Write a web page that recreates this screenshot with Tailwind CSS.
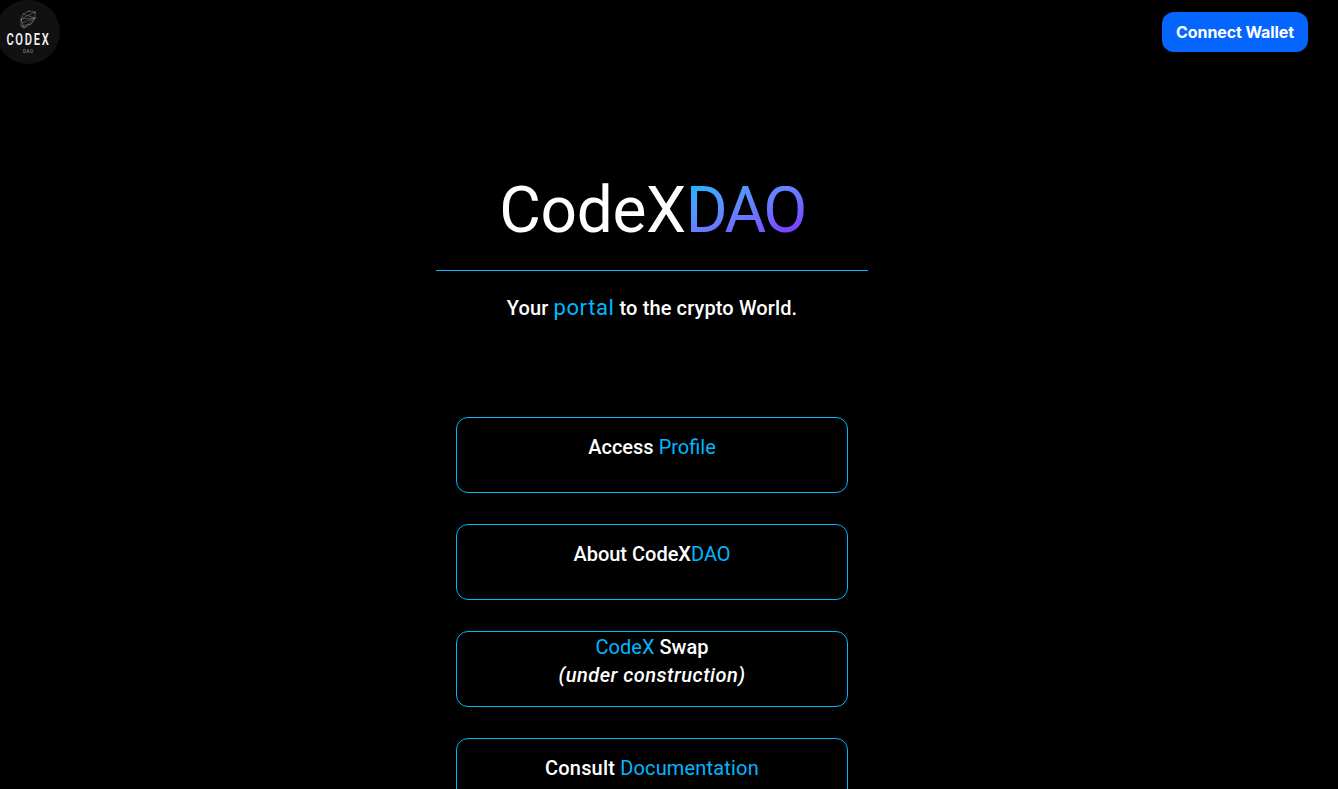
<!DOCTYPE html>
<html lang="en">
<head>
<meta charset="utf-8">
<title>CodeXDAO</title>
<script src="https://cdn.jsdelivr.net/npm/@tailwindcss/browser@4"></script>
</head>
<body class="h-screen overflow-hidden bg-black font-['Roboto',sans-serif] text-white">
<header class="flex h-16 items-start justify-between pr-[30px]">
  <svg class="h-16 w-[60px]" viewBox="0 0 60 64">
    <circle cx="28" cy="32" r="32" fill="#111"/>
    <g fill="none" stroke="#858585" stroke-width=".5">
      <path d="M23 14l6-3 6 1v6l-4 6-7 4-3-2v-7zM23 14l12 4M21 19l14-1M21 19l10-5 4-2M21 26l10-2 4-6M24 28l-3-9M24 28l10-10M22 23l12-5"/>
    </g>
    <g fill="#aaa"><circle cx="29" cy="11" r=".5"/><circle cx="35" cy="12.3" r=".6"/><circle cx="35" cy="18" r=".6"/><circle cx="21.3" cy="20" r=".6"/><circle cx="24" cy="27.5" r=".6"/></g>
    <text x="6.4" y="44.8" font-family="Roboto" font-size="16.5" font-weight="600" fill="#eee" textLength="44" lengthAdjust="spacingAndGlyphs" letter-spacing="2.5">CODEX</text>
    <text x="23" y="53" font-family="Roboto" font-size="4.5" fill="#999" textLength="10">DAO</text>
  </svg>
  <button class="mt-3 h-10 w-[146px] rounded-xl bg-[#0565ff] text-center font-['Inter',sans-serif] text-base font-bold tracking-[-0.1px]">Connect Wallet</button>
</header>
<main class="flex w-[1304px] flex-col items-center">
  <h1 class="mt-[122px] flex h-[84px] w-[432px] justify-center text-[64px] leading-[50px] whitespace-nowrap">
    <span class="tracking-[-0.4px]">CodeX</span><span class="h-[50px] bg-linear-to-br from-[#00b7ff] to-[#7d26ff] bg-clip-text tracking-[-2.6px] text-transparent">DAO</span>
  </h1>
  <div class="h-px w-[432px] bg-[#00b7ff]"></div>
  <p class="mt-[21px] h-[125px] text-xl leading-[32px] font-medium tracking-[0.12px] whitespace-nowrap">Your <span class="text-[22px] font-normal tracking-[0.6px] text-[#00b7ff]">portal</span> to the crypto World.</p>
  <nav class="flex flex-col gap-[31px] text-center text-xl leading-7 font-medium">
    <a class="h-[76px] w-[392px] rounded-xl border border-[#00b7ff] pt-[15px]">Access <span class="font-normal text-[#00b7ff]">Profile</span></a>
    <a class="h-[76px] w-[392px] rounded-xl border border-[#00b7ff] pt-[15px]">About CodeX<span class="font-normal text-[#00b7ff]">DAO</span></a>
    <a class="h-[76px] w-[392px] rounded-xl border border-[#00b7ff] pt-px"><span class="font-normal text-[#00b7ff]">CodeX</span> Swap<br><em class="tracking-[0.47px]">(under construction)</em></a>
    <a class="h-[76px] w-[392px] rounded-xl border border-[#00b7ff] pt-[15px] tracking-[0.17px]">Consult <span class="font-normal text-[#00b7ff]">Documentation</span></a>
  </nav>
</main>
</body>
</html>
